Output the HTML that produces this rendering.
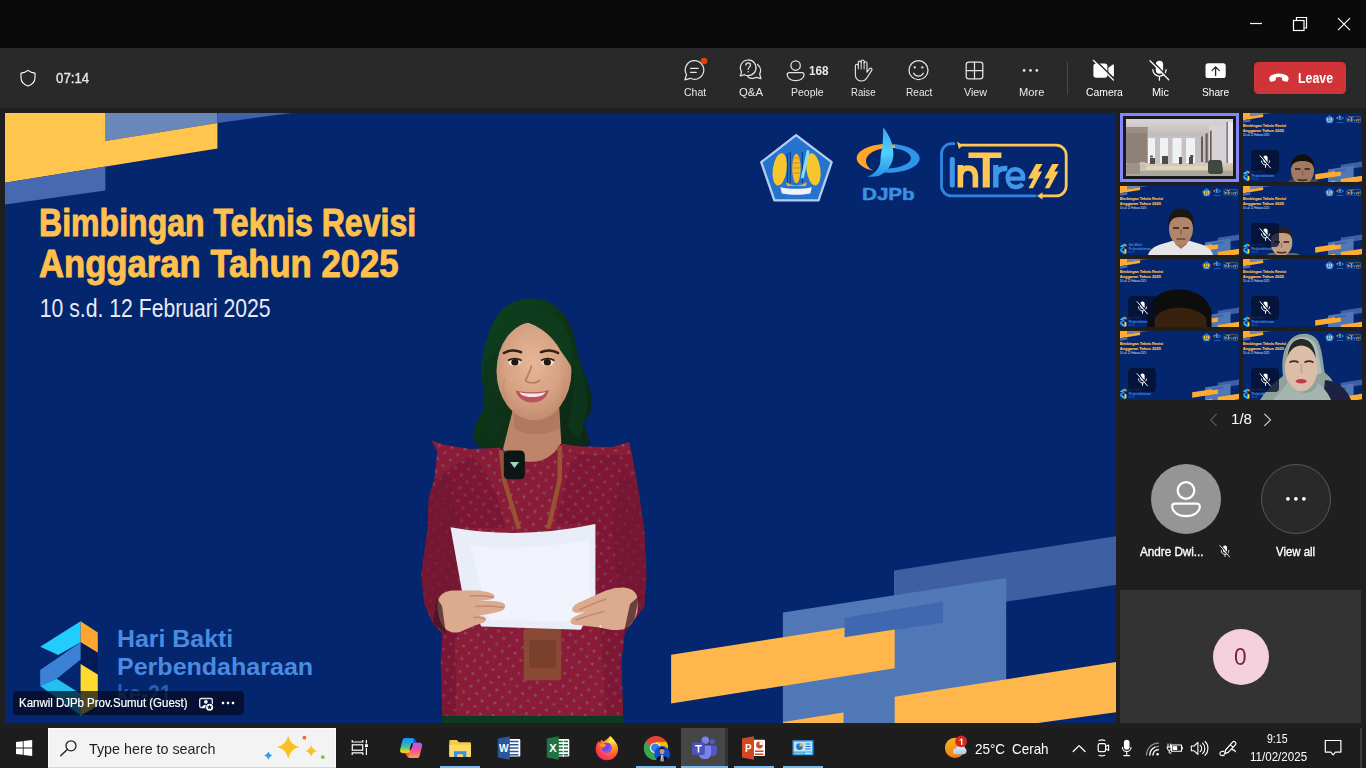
<!DOCTYPE html>
<html lang="en">
<head>
<meta charset="utf-8">
<title>Microsoft Teams meeting</title>
<style>
*{box-sizing:border-box;margin:0;padding:0}
html,body{width:1366px;height:768px;overflow:hidden;background:#1f1f1f}
body{position:relative;font-family:"Liberation Sans",sans-serif;color:#fff}
.t{position:absolute;white-space:nowrap;transform-origin:left center;display:block}
.abs{position:absolute}
.sb{-webkit-text-stroke:.35px currentColor}
.sb2{-webkit-text-stroke:.2px currentColor}
svg{position:absolute;overflow:visible}
#titlebar{position:absolute;left:0;top:0;width:1366px;height:48px;background:#0a0a0a}
#toolbar{position:absolute;left:0;top:48px;width:1366px;height:60px;background:#292929}
#stage{position:absolute;left:5px;top:113px;width:1111px;height:610px;background:#04266e;overflow:hidden}
#side{position:absolute;left:1116px;top:108px;width:250px;height:620px}
#taskbar{position:absolute;left:0;top:728px;width:1366px;height:40px;background:#1d1d1d}
</style>
</head>
<body>
<div id="titlebar">
<svg width="1366" height="48" viewBox="0 0 1366 48" style="left:0;top:0">
  <g fill="none" stroke="#fff" stroke-width="1.2">
    <path d="M1250 23.5H1262"/>
    <path d="M1296.500 20V17.500H1306.500V28H1304.500"/>
    <rect x="1293.500" y="20.500" width="10.500" height="10"/>
    <path d="M1338 18.2L1350 30.2M1350 18.2L1338 30.2" stroke-width="1.15"/>
  </g>
</svg>
</div>
<div id="toolbar">
<svg width="1366" height="60" viewBox="0 48 1366 60" style="left:0;top:0">
  <g fill="none" stroke="#e4e4e4" stroke-width="1.25" stroke-linecap="round" stroke-linejoin="round">
    <!-- shield -->
    <path d="M28 70.4C30.2 72.2 32.6 73 35 73.1V77.4C35 81.6 32 84.6 28 86C24 84.6 21 81.6 21 77.4V73.1C23.4 73 25.8 72.2 28 70.4Z" stroke="#fff" stroke-width="1.1"/>
    <!-- chat -->
    <path d="M694.6 60.7a9.3 9.3 0 1 1-4.3 17.6l-5.4 1.6 1.6-5.2a9.3 9.3 0 0 1 8.1-14z"/>
    <path d="M690.6 68.4H698.2M690.6 72.4H696.2"/>
    <!-- q&a --><g transform="translate(0 .8)">
    <path d="M748.2 59.2a7.8 7.8 0 1 1-3.6 14.7l-4.3 1.3 1.3-4.1a7.8 7.8 0 0 1 6.6-11.9z"/>
    <path d="M757.6 63.6a7.8 7.8 0 0 1 2.1 9.6l1.2 4.6-4.6-1.3a7.8 7.8 0 0 1-8.6-.6"/>
    <path d="M745.9 64.4c0-3 4.6-3 4.6 0 0 1.900-2.300 2-2.300 4.100" stroke-width="1.2"/>
    <circle cx="748.2" cy="71" r=".75" fill="#e4e4e4" stroke="none"/>
    </g><!-- people -->
    <circle cx="795.6" cy="65.6" r="4.7"/>
    <path d="M789.2 72.7H802a2 2 0 0 1 2 2c0 3.500-3.500 5.900-8.400 5.900s-8.400-2.400-8.400-5.900a2 2 0 0 1 2-2z"/>
    <!-- raise hand -->
    <path d="M855.4 74.800V65.700a1.450 1.450 0 0 1 2.900 0V62.600a1.450 1.450 0 0 1 2.900 0V61.500a1.450 1.450 0 0 1 2.900 0V63.200a1.450 1.450 0 0 1 2.900 0V72.200l2.600-3.500a1.350 1.350 0 0 1 2.100 1.700l-4.700 7.300c-1.400 2.200-3 3.300-5.400 3.300-3.600 0-6.200-2.400-6.200-6.200z" stroke-width="1.150"/>
    <path d="M858.300 65.700V68.900M861.200 62.600V68.900M864.100 63.200V68.900" stroke-width="1"/>
    <!-- react -->
    <circle cx="918.5" cy="70.2" r="9.5"/>
    <path d="M913.700 73.200c1.100 2 2.800 3 4.800 3s3.700-1 4.800-3"/>
    <circle cx="914.8" cy="67.400" r="1.150" fill="#e4e4e4" stroke="none"/>
    <circle cx="922.3" cy="67.400" r="1.150" fill="#e4e4e4" stroke="none"/>
    <!-- view -->
    <rect x="966.200" y="62.200" width="16.600" height="16.600" rx="2.600"/>
    <path d="M974.5 62.200V78.800M966.200 70.500H982.800"/>
    <!-- more -->
    <g fill="#e4e4e4" stroke="none"><circle cx="1024.1" cy="70.400" r="1.350"/><circle cx="1030.500" cy="70.400" r="1.350"/><circle cx="1036.800" cy="70.400" r="1.350"/></g>
    <!-- divider -->
    <path d="M1067.500 62V94" stroke="#484848" stroke-width="1"/>
  </g>
  <!-- camera off -->
  <g fill="#fff">
    <rect x="1093.400" y="63.400" width="14" height="14.300" rx="2.600"/>
    <path d="M1108.400 67.800l4.400-3.200a.7.700 0 0 1 1.100.6v10.700a.7.700 0 0 1-1.100.6l-4.400-3.200z"/>
    <path d="M1094.400 59.400L1114.400 79" stroke="#292929" stroke-width="1.500"/>
    <path d="M1093.300 60.300L1113.400 80" stroke="#fff" stroke-width="1.250" stroke-linecap="round"/>
    <!-- mic off -->
    <rect x="1155.800" y="60.700" width="7.300" height="13" rx="3.650"/>
    <path d="M1152.800 69.600a6.650 6.650 0 0 0 13.300 0M1159.450 76.400V80.200" fill="none" stroke="#fff" stroke-width="1.250" stroke-linecap="round"/>
    <path d="M1151.100 59.800L1169.700 78.900" stroke="#292929" stroke-width="1.500"/>
    <path d="M1150 60.700L1168.700 79.800" stroke="#fff" stroke-width="1.250" stroke-linecap="round"/>
    <!-- share -->
    <rect x="1205.500" y="63.300" width="20.200" height="14.800" rx="2.600"/>
    <path d="M1215.600 75.600V67M1211.900 70.600l3.700-3.700 3.700 3.700" fill="none" stroke="#292929" stroke-width="1.300" stroke-linecap="round" stroke-linejoin="round"/>
  </g>
  <!-- chat badge -->
  <circle cx="704" cy="61" r="3.300" fill="#e2400e"/>
  <!-- leave -->
  <rect x="1254" y="62" width="92" height="32" rx="4.500" fill="#d13438"/>
  <path d="M1278.900 73.500c-3.500 0-6.500.9-8.500 2.400-1 .8-1.300 1.900-1.100 3.100l.2 1.300c.2 1 1.100 1.600 2.100 1.400l2.600-.6c.8-.2 1.400-.800 1.500-1.600l.3-2c1-.4 1.900-.6 2.900-.6s1.900.2 2.900.6l.3 2c.1.800.7 1.400 1.500 1.600l2.600.6c1 .2 1.900-.4 2.100-1.400l.2-1.300c.2-1.200-.1-2.300-1.100-3.100-2-1.500-5-2.400-8.500-2.400z" fill="#fff"/>
</svg>
<span class="t sb" style="left:56.00px;top:23.82px;font-size:13.8px;line-height:13.8px;color:#e6e6e6;transform:scaleX(0.9614);">07:14</span>
<span class="t" style="left:684.00px;top:38.67px;font-size:10.9px;line-height:10.9px;color:#e8e8e8;transform:scaleX(0.9642);">Chat</span>
<span class="t" style="left:739.00px;top:38.67px;font-size:10.9px;line-height:10.9px;color:#e8e8e8;transform:scaleX(1.0426);">Q&amp;A</span>
<span class="t" style="left:808.80px;top:16.94px;font-size:12.0px;line-height:12.0px;color:#e8e8e8;transform:scaleX(0.9789);font-weight:700;">168</span>
<span class="t" style="left:790.60px;top:38.67px;font-size:10.9px;line-height:10.9px;color:#e8e8e8;transform:scaleX(0.9634);">People</span>
<span class="t" style="left:850.70px;top:38.67px;font-size:10.9px;line-height:10.9px;color:#e8e8e8;transform:scaleX(0.8791);">Raise</span>
<span class="t" style="left:905.80px;top:38.67px;font-size:10.9px;line-height:10.9px;color:#e8e8e8;transform:scaleX(0.9271);">React</span>
<span class="t" style="left:963.50px;top:38.67px;font-size:10.9px;line-height:10.9px;color:#e8e8e8;transform:scaleX(0.9859);">View</span>
<span class="t" style="left:1018.50px;top:38.67px;font-size:10.9px;line-height:10.9px;color:#e8e8e8;transform:scaleX(1.0228);">More</span>
<span class="t" style="left:1085.50px;top:38.67px;font-size:10.9px;line-height:10.9px;color:#fff;transform:scaleX(0.9518);">Camera</span>
<span class="t" style="left:1151.80px;top:38.67px;font-size:10.9px;line-height:10.9px;color:#fff;transform:scaleX(1.0028);">Mic</span>
<span class="t" style="left:1202.10px;top:38.67px;font-size:10.9px;line-height:10.9px;color:#fff;transform:scaleX(0.9317);">Share</span>
<span class="t" style="left:1297.70px;top:23.05px;font-size:14.0px;line-height:14.0px;color:#fff;transform:scaleX(0.8817);font-weight:700;">Leave</span>
</div>
<div id="stage">
<svg width="1111" height="610" viewBox="5 113 1111 610" style="left:0;top:0">
  <defs>
    <filter id="soft" x="-5%" y="-5%" width="110%" height="110%"><feGaussianBlur stdDeviation="0.7"/></filter>
    <filter id="soft2" x="-20%" y="-20%" width="140%" height="140%"><feGaussianBlur stdDeviation="2.2"/></filter>
    <pattern id="dots" width="13" height="13" patternUnits="userSpaceOnUse" patternTransform="rotate(8)">
      <circle cx="3" cy="3" r="1.5" fill="#82718a" opacity=".6"/>
      <circle cx="9.5" cy="9.5" r="1.4" fill="#7d6c86" opacity=".55"/>
    </pattern>
    <radialGradient id="skin" cx=".48" cy=".42" r=".62"><stop offset="0" stop-color="#e6b898"/><stop offset=".6" stop-color="#d6a283"/><stop offset="1" stop-color="#bf8a6d"/></radialGradient>
    <linearGradient id="hairg" x1="0" y1="0" x2="1" y2="1">
      <stop offset="0" stop-color="#12461f"/><stop offset=".5" stop-color="#0b3218"/><stop offset="1" stop-color="#082812"/>
    </linearGradient>
    <symbol id="slide" viewBox="5 113 1111 610" preserveAspectRatio="none">
      <rect x="5" y="113" width="1111" height="610" fill="#04266e"/>
      <!-- top-left shapes -->
      <polygon points="105.4,113 217.4,113 217.4,123 105.4,141" fill="#6a87b9"/>
      <polygon points="217.4,113 292,113 217.4,123" fill="#3f62ab"/>
      <polygon points="5,113 105.4,113 105.4,141 217.4,123 217.4,148.6 5,182.7" fill="var(--g1,#ffc54d)"/>
      <polygon points="5,182.7 105.4,166.6 105.4,190.4 5,204.6" fill="#4669b0"/>
      <!-- bottom-right shapes -->
      <polygon points="894,570.5 1116,536.2 1116,584.7 894,619" fill="#3f5fa3"/>
      <polygon points="782.9,612.6 1006.2,577.9 1006.2,723 782.9,723" fill="#5078b6"/>
      <polygon points="844.5,617.7 942.9,601.8 942.9,622.7 844.5,637.2" fill="#4068b0"/>
      <polygon points="671.1,654.7 844.5,627.8 844.5,637.2 894.7,629.4 894.7,668.2 671.1,703.5" fill="var(--g2,#ffb74d)"/>
      <polygon points="894.7,696.8 1116,662.1 1116,712.2 1038,723 894.7,723" fill="var(--g2,#ffb74d)"/>
      <polygon points="783,722 843.5,712.6 843.5,723 783,723" fill="var(--g2,#ffb74d)"/>
      <!-- headline -->
      <g font-family="Liberation Sans, sans-serif" font-weight="700" fill="#ffc04d" stroke="#ffc04d" stroke-width="1" stroke-linejoin="round">
        <text x="39" y="236" font-size="38.4" textLength="377.2" lengthAdjust="spacingAndGlyphs">Bimbingan Teknis Revisi</text>
        <text x="39" y="277" font-size="38.4" textLength="359.500" lengthAdjust="spacingAndGlyphs">Anggaran Tahun 2025</text>
      </g>
      <text x="39.800" y="317.100" font-family="Liberation Sans, sans-serif" font-size="25.500" fill="#e6eaf4" textLength="230.800" lengthAdjust="spacingAndGlyphs">10 s.d. 12 Februari 2025</text>
      <!-- logo 1 : pentagon -->
      <polygon points="796.1,135.2 831.7,162.2 818.5,200.4 774.4,200.4 761.2,162.2" fill="#2573cf" stroke="#b6cdf2" stroke-width="2.300" stroke-linejoin="round"/>
      <ellipse cx="779.8" cy="169.4" rx="7" ry="16.3" fill="#f7c62c" transform="rotate(8 779.8 169.4)"/>
      <ellipse cx="813.4" cy="169.4" rx="7" ry="16.3" fill="#f7c62c" transform="rotate(-8 813.4 169.4)"/>
      <path d="M787.500 153v30M790.300 152v31M802.400 152v31" stroke="#123e8a" stroke-width="1.300"/>
      <ellipse cx="796.4" cy="168.5" rx="4.200" ry="14.800" fill="#f2bb2a"/>
      <path d="M793 158h6.800M793 163h6.800M793 168h6.800M793 173h6.800" stroke="#c98f1c" stroke-width="1"/>
      <path d="M808 151.600L802.500 177" stroke="#7fe0f5" stroke-width="3" stroke-linecap="round"/>
      <path d="M786 182c3 2.500 8 3.500 10.400 3.500s7.400-1 10.400-3.500l-1 4h-18.800z" fill="#e9b324"/>
      <path d="M780.300 187.200c10 2 21.600 2 31.600 0l-1.600 6.300c-9 1.700-19.400 1.700-28.400 0z" fill="#eef2fa"/>
      <!-- logo 2 : DJPb -->
      <defs><linearGradient id="sail" x1="0" y1="0" x2="0" y2="1"><stop offset="0" stop-color="#3aa4ee"/><stop offset=".5" stop-color="#4fd0ff"/><stop offset="1" stop-color="#2a8ee6"/></linearGradient></defs>
      <path d="M888.400 143.700c-17.300 0-31.700 6.500-31.700 14.500 0 5.700 7 10.200 16.500 12.600-4.700-2.700-7.200-6.100-7.200-9.600 0-7.300 10-13.200 24.400-13.200 4 0 7.700.5 11.100 1.300-3.500-3.400-8-5.600-13.100-5.600z" fill="#ffa629"/>
      <path d="M893 143.900c15 1.300 26.700 7.300 26.700 14.300 0 8-14 14.500-31.300 14.500-3.500 0-6.800-.3-10-.8 2.700-.9 5.100-2 7.200-3.300 14.300-.3 25.300-5 25.300-10.400 0-4.500-6.300-8.300-14.800-9.800-.8-1.600-1.800-3.100-3.100-4.500z" fill="#2f95ea"/>
      <path d="M883.100 127.200c6.500 8 10.300 17 10.300 26.700 0 9.300-5.700 17.700-13.700 21.500-4 1.300-8.400 1.600-12.400 1.300 8-3 13.200-9 13.200-17.200 0-5 1.500-10.300 2.200-16.500.4-5 .5-10.300.4-15.800z" fill="url(#sail)"/>
      <text x="862" y="200.400" font-family="Liberation Sans, sans-serif" font-weight="700" font-size="16.500" fill="#3d8fe0" stroke="#3d8fe0" stroke-width=".5" textLength="52.700" lengthAdjust="spacingAndGlyphs">DJPb</text>
      <!-- logo 3 : InTress -->
      <path d="M955 143.700h-3.500a10 10 0 0 0-10 10V185.900a10 10 0 0 0 10 10H1036.500" fill="none" stroke="#2f86e0" stroke-width="2.800"/>
      <path d="M958.500 145.200H1056.200a10 10 0 0 1 10 10V185.900a10 10 0 0 1-10 10H1040" fill="none" stroke="#ffc655" stroke-width="2.800"/>
      <path d="M957 141.500l5.500 3.700-3.500 3.700z" fill="#ffc655"/><path d="M1042.500 192.200l-5.500 3.700 5.500 3.700z" fill="#ffc655"/>
      <rect x="949.800" y="156.900" width="5" height="30.700" rx="2" fill="#3f97ea"/>
      <path d="M960.400 165.100V187.600M960.400 177.500c0-6.300 2.700-9.500 7.500-9.500s7.500 3.200 7.500 9.500V187.600" fill="none" stroke="#ffc655" stroke-width="5.600"/>
      <path d="M968.400 152.500h33v5.600h-33zM982.700 152.500h7.100v35.100h-7.100z" fill="#ffc655"/>
      <path d="M995.800 165.100V187.600M995.800 177c0-6 4-9 11.500-8.500" fill="none" stroke="#3f97ea" stroke-width="5.400"/>
      <path d="M1009.500 178.600h13.600c.4-5.800-2.900-9.300-7.600-9.300s-7.900 3.700-7.900 8.800 3.300 8.900 8.100 8.900c3 0 5.300-1.100 6.900-3.200" fill="none" stroke="#3f97ea" stroke-width="4.400"/>
      <path d="M1036 164h6.500l-4.500 7.500h4l-9 16.700h-4.500l5-9.700h-5.500z" fill="#ffc655"/>
      <path d="M1052.300 164h6.500l-4.500 7.500h4l-9 16.700h-4.500l5-9.700h-5.500z" fill="#ffc655"/>
      <!-- Hari Bakti logo -->
      <polygon points="80.6,621.2 40.2,646.7 58.2,654.9 80.6,642.2" fill="#22ccfb"/>
      <polygon points="80.6,621.2 97.8,632.4 97.8,652.7 80.6,642.2" fill="#ffa530"/>
      <polygon points="80.6,642.2 97.8,652.7 97.8,674.4 80.6,663.9" fill="#031c58"/>
      <polygon points="80.6,642.2 40.2,669.9 40.2,686 56.7,678.8 80.6,659.4" fill="#3b82d6"/>
      <polygon points="40.2,686 56.7,678.8 80.6,693.8 80.6,715.5" fill="#22c0f0"/>
      <polygon points="80.6,663.9 97.8,674.4 97.8,705.8 80.6,715.5" fill="#ffd92e"/>
      <g font-family="Liberation Sans, sans-serif" font-weight="700" fill="#4a8ae0">
        <text x="117" y="647.300" font-size="23.700" textLength="116.200" lengthAdjust="spacingAndGlyphs">Hari Bakti</text>
        <text x="117" y="674.700" font-size="23.700" textLength="196.100" lengthAdjust="spacingAndGlyphs">Perbendaharaan</text>
        <text x="117" y="701.500" font-size="23.700" fill="#2c5cae" textLength="54.700" lengthAdjust="spacingAndGlyphs">ke-21</text>
      </g>
    </symbol>
  </defs>
  <use href="#slide" x="5" y="113" width="1111" height="610"/>
  <!-- presenter -->
  <g filter="url(#soft)">
    <!-- trousers -->
    <rect x="442" y="700" width="181" height="24" fill="#0a3a22"/>
    <!-- hair (back) -->
    <path d="M530.400,298.600C540,298 549,301 554.800,305.800C562,311.500 566.500,317 569.100,323C573,331 575,338 576.300,345.900C578,355 580.500,363.500 583.400,371.700C586.500,380 590,387 591.500,394.600C592.500,402 591.500,409 589.200,414.700C587.500,418 585,421 583.400,423.300C586,430 589,437 590.600,443.400C584,446.500 577,447 568,446L500.300,447.500C495,449.500 490,450 486,449.100C480.500,447.500 475.500,444.500 473.100,440.500C472.500,434.500 474,428.500 476,423.300C480,416 484.500,408.500 486,400.400C484,393 482.300,385.500 481.700,377.400C481.200,370 481.800,362.500 483.100,354.500C484.800,344.500 487.500,334.800 491.700,325.900C496,316.500 501.500,309 508.900,304.400C515.500,300.500 522.500,298.900 530.400,298.600Z" fill="url(#hairg)"/>
    <!-- neck -->
    <path d="M514,405H559L561.500,446L552,458L536,467L515,463.500L503,449Z" fill="#bd866a"/>
    <path d="M514,410C522,424 548,424 559,408L560,428C548,436 524,436 514,428Z" fill="#a8735a" opacity=".6"/>
    <!-- blouse -->
    <path d="M431.500,440.500L445,445L470,449L500.300,447.700C505,453 509,456 515,458.500C521,461 527,462 533,461.800C540,461.500 546,459 551,455C555,452 558,448 560.500,443.400L580,446.500L612,447L629.300,442L632,455L637.900,486.400L644.200,528.800L646.500,577.700L644.200,607L634.400,620L624.700,633L621.400,662.300L623,708L623,716H442.300L442.300,708L440.700,662.300L442.300,633L432.600,623.300L424.400,603.700L421.200,574.400L427.700,528.800L428.700,497.800L434.200,480L437.300,452Z" fill="#8a1c39"/>
    <path d="M431.500,440.500L445,445L470,449L500.300,447.700C505,453 509,456 515,458.500C521,461 527,462 533,461.800C540,461.500 546,459 551,455C555,452 558,448 560.500,443.400L580,446.500L612,447L629.300,442L632,455L637.900,486.400L644.200,528.800L646.500,577.700L644.200,607L634.400,620L624.700,633L621.400,662.300L623,708L623,716H442.300L442.300,708L440.700,662.300L442.300,633L432.600,623.300L424.400,603.700L421.200,574.400L427.700,528.800L428.700,497.800L434.200,480L437.300,452Z" fill="url(#dots)"/>
    <!-- shading on blouse -->
    <path d="M470,455C490,470 500,500 505,528L450.500,527.200L461.900,590.700L470,610L455,640L456,716H442.300L440.700,662.300L442.300,633L432.600,623.300L424.400,603.700L421.200,574.400L427.700,528.800L428.700,497.800L434.200,480Z" fill="#5c1026" opacity=".28"/>
    <path d="M575,455C565,475 560,505 556,524L595.400,524L595.400,603.700L600,630L606,716H623L621.400,662.300L624.700,633L634.400,620L644.200,607L646.500,577.700L644.200,528.800L637.900,486.400L632,455Z" fill="#5c1026" opacity=".22"/>
    <path d="M446,470L458,520L455,590L432,612L424.400,603.700L421.200,574.400L427.700,528.800L428.700,497.800Z" fill="#6f152f" opacity=".55"/>
    <path d="M622,470L612,520L618,590L640,612L644.200,607L646.500,577.700L644.200,528.800L637.900,486.400Z" fill="#6f152f" opacity=".55"/>
    <!-- face -->
    <ellipse cx="534" cy="371" rx="37.500" ry="49" fill="url(#skin)"/>
    <path d="M496,368C497.500,350 501,338 508,329C511,325 514,322.500 517.400,321.500C523,320.500 531,322.500 542,329.800C550,335.500 556.500,343 560.800,351C565,357 569,362 572,368C577,340 565,312 534,308C505,309 491,340 496,368Z" fill="#0c3a1b"/>
    <!-- face features -->
    <path d="M504,353c5-3.200 12-3.200 17-.8M541,352.200c5-2.400 12-2.400 17 .8" stroke="#33201a" stroke-width="2.600" fill="none" stroke-linecap="round"/>
    <ellipse cx="514.600" cy="362.500" rx="6.200" ry="3.300" fill="#f1e6de"/>
    <ellipse cx="547.600" cy="362.500" rx="6.200" ry="3.300" fill="#f1e6de"/>
    <ellipse cx="514.900" cy="362.300" rx="3.600" ry="3.200" fill="#22140f"/>
    <ellipse cx="547.300" cy="362.300" rx="3.600" ry="3.200" fill="#22140f"/>
    <path d="M508,360.500c4-2.500 9.500-2.500 13.500 0M541,360.500c4-2.500 9.500-2.500 13.500 0" stroke="#2a1812" stroke-width="1.500" fill="none"/>
    <path d="M531.500,366C530,372 527,377 525.500,380.500C528,383.500 536,384 539.500,380.500" stroke="#b98264" stroke-width="1.800" fill="none" stroke-linecap="round"/>
    <path d="M515.500,390.500c7 2.500 26 2.500 33.500-.5-2.500 9-9.500 12.500-17 12.500s-14-4-16.500-12z" fill="#b8525e"/>
    <path d="M519.500,392.300c6 1.800 20 1.800 26-.3-1.800 3.600-5.800 5-13 5s-11.400-1.400-13-4.700z" fill="#f3eae6"/>
    <path d="M505,378c-3 8-2 18 4 26M563,378c3 8 2 18-4 26" stroke="#c08d70" stroke-width="2" fill="none" opacity=".55"/>
    <!-- hair side strands over face edge -->
    <path d="M497.500,350C493,375 494,405 500,430L488,440L483,400L484,362Z" fill="#0b351a"/>
    <path d="M571,350C575,375 574,400 568,428L580,440L588,405L582,368Z" fill="#0b351a"/>
    <!-- lanyard -->
    <path d="M501,450L504.200,480L518.900,528.800M560,446L559.600,480L548.200,528.800" stroke="#9a5330" stroke-width="4.500" fill="none"/>
    <!-- lavalier mic -->
    <rect x="503.800" y="450.500" width="21" height="28.700" rx="4.500" fill="#0c1612"/>
    <path d="M510,462h9l-4.500,6z" fill="#9fd8c0"/>
    <!-- ID badge -->
    <rect x="523.700" y="628" width="37.500" height="52.300" rx="3" fill="#8a4a36"/>
    <rect x="529" y="640" width="27" height="28" rx="2" fill="#7a3f2f"/>
    <!-- paper -->
    <path d="M450.500,527.200Q520,540 595.400,524L595.400,603.700L580.700,629.800L481.400,626.500L461.900,590.700Z" fill="#e8edf7"/>
    <path d="M470,545Q520,552 590,540L590,600L578,622L490,620Z" fill="#f1f4fb" opacity=".8"/>
    <!-- hands -->
    <path d="M437.6,603C438,596 444,591 452,590.5L470,590.5C480,590 492,592 494,595C495,597.5 493,599 490,599.5L478,601C488,600.5 500,601 504,603.5C506.5,606 505,609.5 501,611C494,613 486,614.5 478,616C482,616 486,617 486,619.5C486,622 482,623.5 476,625L462,631C455,634.5 447,632 443,626C439,620 437,611 437.6,603Z" fill="#dcab8e"/>
    <path d="M470,596C480,595.5 489,596 493.500,597.500M476,606.500C486,605.500 496,606 503,607.500M474,617.500C478,617 482,617.500 485,619" stroke="#c18a78" stroke-width="1.600" fill="none" stroke-linecap="round"/>
    <path d="M637.9,600C637.5,593 632,588 624,587.5C616,587 606,590 598,594L578,603C573,605.5 571,609 573,611.5C575,613.5 580,613 586,611.5C580,614 573,617 571,619.5C569.5,622.5 572,625 577,625L600,627.5C608,630 618,631 624,629C631,626.5 636,619 637.5,611Z" fill="#dcab8e"/>
    <path d="M606,599C597,602 588,606 580,609.500M604,611.500C595,613.500 584,617 576,620" stroke="#c18a78" stroke-width="1.600" fill="none" stroke-linecap="round"/>
    <circle cx="600.500" cy="626.500" r="1.400" fill="#f0d9a0"/>
    <!-- cuffs -->
    <path d="M432.600,623.300L446,634L442,606L437,598Z" fill="#3a1220" opacity=".7"/>
    <path d="M634.400,620L624,632L630,604L639,596Z" fill="#3a1220" opacity=".7"/>
  </g>
</svg>
<!-- participant name pill -->
<div class="abs" style="left:8px;top:578.400px;width:231px;height:23.600px;border-radius:4px;background:rgba(4,10,32,.72)"></div>
<span class="t sb2" style="left:14.40px;top:584.34px;font-size:12.0px;line-height:12.0px;color:#fff;transform:scaleX(0.9546);">Kanwil DJPb Prov.Sumut (Guest)</span>
<svg width="40" height="16" viewBox="197 696 40 16" style="left:192px;top:583px">
  <rect x="199.700" y="698.500" width="12.600" height="9" rx="1.400" fill="none" stroke="#dfe3ee" stroke-width="1.400"/>
  <circle cx="205.900" cy="701.800" r="1.900" fill="#fff"/><path d="M202 707.400c0-3.400 7.800-3.400 7.800 0z" fill="#fff"/>
  <circle cx="209.600" cy="707.200" r="4.300" fill="#06122f"/>
  <circle cx="209.600" cy="707.200" r="3.500" fill="#fff"/>
  <path d="M209.600 704.700l.75 1.600 1.750.2-1.300 1.150.4 1.700-1.600-.9-1.600.9.4-1.700-1.300-1.150 1.750-.2z" fill="#06122f"/>
  <g fill="#fff"><rect x="221.800" y="701.850" width="2.400" height="2.400" rx=".7"/><rect x="226.800" y="701.850" width="2.400" height="2.400" rx=".7"/><rect x="231.800" y="701.850" width="2.400" height="2.400" rx=".7"/></g>
</svg>
</div>
<div id="side">
<style>
.tile{position:absolute;width:119px;height:68.670px;--g1:#ffab32;--g2:#ffab32;overflow:hidden;background:#04266e}
.tile svg{left:0;top:0}
.mut{position:absolute;width:28px;height:24px;border-radius:4px;background:rgba(6,16,44,.78)}
</style>
<svg width="0" height="0" style="left:0;top:0">
  <defs>
    <symbol id="micoff" viewBox="0 0 16 16">
      <rect x="5.700" y="1.600" width="4.600" height="8" rx="2.300" fill="#fff"/>
      <path d="M3.700 7.400a4.300 4.300 0 0 0 8.600 0M8 11.800V14.300" fill="none" stroke="#fff" stroke-width="1" stroke-linecap="round"/>
      <path d="M2.900 1.300L14 14.300" stroke="var(--sh,#0a1838)" stroke-width="1.300"/>
      <path d="M2.200 1.800L13.300 14.800" stroke="#fff" stroke-width="1" stroke-linecap="round"/>
    </symbol>
  </defs>
</svg>
<!-- tile 1 : room background, active speaker ring -->
<div class="tile" style="left:4px;top:5px;height:69px;background:#1a1a1a;border:3px solid #8486fb">
  <svg width="107" height="57" viewBox="0 0 107 57" style="left:3px;top:3px;overflow:hidden">
    <defs>
      <linearGradient id="ceil" x1="0" y1="0" x2="0" y2="1"><stop offset="0" stop-color="#d9d6d6"/><stop offset="1" stop-color="#bdb6b3"/></linearGradient>
      <linearGradient id="floor" x1="0" y1="0" x2="0" y2="1"><stop offset="0" stop-color="#d9cdb8"/><stop offset="1" stop-color="#b4ae9e"/></linearGradient>
    </defs>
    <g filter="url(#soft)"><rect x="-2" y="-2" width="111" height="61" fill="#c9c4c4"/>
    <rect width="107" height="20" fill="url(#ceil)"/>
    <rect x="21" y="17" width="62" height="30" fill="#c6c0c2"/>
    <rect x="0" y="8" width="21.500" height="40" fill="#8f8177"/>
    <rect x="0" y="8" width="21.500" height="6" fill="#9f948b" opacity=".7"/>
    <g fill="#f0f1f3"><rect x="22" y="19" width="7" height="25"/><rect x="34" y="19" width="8" height="25"/><rect x="46.500" y="19" width="9" height="25"/><rect x="60" y="19" width="9" height="25"/></g>
    <rect x="83" y="6" width="24" height="48" fill="#d6d2d6"/>
    <path d="M75 18l2-1v26h-2zM79.500 15l2.200-1.200v30h-2.200zM84 12l1.600-.8v32h-1.600z" fill="#6a5d58"/>
    <rect x="101.500" y="3" width="5.500" height="50" fill="#e9e9ee"/><rect x="100.500" y="3" width="1.300" height="50" fill="#6d6560"/>
    <rect x="0" y="44" width="107" height="13" fill="url(#floor)"/>
    <path d="M22 47h66l4 4H18z" fill="#e4d9c2" opacity=".8"/>
    <path d="M0 52h107v5H0z" fill="#aaa79b"/>
    <rect x="0" y="44" width="14" height="11" rx="1.500" fill="#9c9288"/><rect x="14" y="43" width="5" height="9" fill="#c9bfb2"/>
    <g fill="#4f4b49"><rect x="24" y="39" width="5" height="6"/><rect x="36" y="37" width="6" height="8"/><rect x="53" y="38" width="3" height="7"/><rect x="63" y="38" width="4" height="7"/><rect x="24" y="36.500" width="3" height="2" rx="1"/><rect x="64" y="36" width="3.500" height="2" rx="1"/></g>
    <path d="M82 44c0-2 1-3 3-3h8c2 0 3 1 3 3l1 8c0 2-1 3-3 3h-9c-2 0-3-1-3-3z" fill="#3f4a40"/>
    </g>
  </svg>
</div>
<!-- slide tiles -->
<div class="tile" style="left:127px;top:5px;height:69px"><svg width="119" height="69"><use href="#slide" x="-4.200" width="127.400" height="69"/>
  <g filter="url(#soft)"><path d="M45 69c1-2 3-3 6-3h18c3 0 5 1 6 3z" fill="#4a463f"/><ellipse cx="59.500" cy="57.500" rx="11.500" ry="14" fill="#a27a63"/><path d="M47.800 55c-.5-9 4.500-13.500 11.700-13.500s12.200 4.500 11.700 13.500c-2-5-4.500-7-11.700-7s-9.700 2-11.700 7z" fill="#15110e"/><path d="M52 56h5.500M61.500 56h5.500" stroke="#2a1c14" stroke-width="1.300"/><path d="M59.500 57.500v5" stroke="#8a624e" stroke-width="1.400"/><path d="M54.500 66.500c3 1 7 1 10 0" stroke="#4a2f25" stroke-width="1.600" fill="none"/></g></svg>
  <div class="mut" style="left:8px;top:36.500px"><svg width="15" height="15" style="left:6.500px;top:4.500px"><use href="#micoff" width="15" height="15"/></svg></div></div>
<div class="tile" style="left:4px;top:78px;height:69px"><svg width="119" height="69"><use href="#slide" x="-4.200" width="127.400" height="69"/>
  <g filter="url(#soft)"><path d="M28 69c2-7 9-10 19-12.500l8-2.500h12l8 2.500c10 2.500 16 5.500 18 12.500z" fill="#e6e6e8"/><path d="M55 52h12v6l-6 5-6-5z" fill="#a9795e"/><ellipse cx="61" cy="42.500" rx="12" ry="16.500" fill="#b08569"/><path d="M48.700 41c-1.200-12 4.300-18.500 12.300-18.500s13.500 6.500 12.300 18.500c-1.500-7-4-10-12.300-10s-10.800 3-12.300 10z" fill="#1a1410"/><path d="M53 42h6M63 42h6" stroke="#2a1c14" stroke-width="1.400"/><path d="M61 43v6" stroke="#8a624e" stroke-width="1.400"/><path d="M56.500 53h9" stroke="#6a4030" stroke-width="1.400"/></g></svg></div>
<div class="tile" style="left:127px;top:78px;height:69px"><svg width="119" height="69"><use href="#slide" x="-4.200" width="127.400" height="69"/>
  <g filter="url(#soft)"><path d="M24 69c1-1.500 3-2 6-2h18c4 0 7 .5 9 2z" fill="#6a6a60"/><ellipse cx="38.500" cy="56.500" rx="10.800" ry="13.500" fill="#c39f84"/><path d="M27.500 53c-.5-8 4-12 11-12s11.500 4 11 12c-2-4.500-4-6-11-6s-9 1.500-11 6z" fill="#2a241c"/><path d="M31.500 56h5.500M40.500 56h5.500" stroke="#2a1c14" stroke-width="1.300"/><path d="M38.500 57v5" stroke="#9a755f" stroke-width="1.300"/><path d="M34 66c3 1 6.500 1 9 0" stroke="#4a3328" stroke-width="1.600" fill="none"/></g></svg>
  <div class="mut" style="left:8px;top:36.500px"><svg width="15" height="15" style="left:6.500px;top:4.500px"><use href="#micoff" width="15" height="15"/></svg></div></div>
<div class="tile" style="left:4px;top:151px;height:68px"><svg width="119" height="69"><use href="#slide" x="-4.200" width="127.400" height="69"/>
  <g filter="url(#soft)"><path d="M27.500 69V56c0-14 12-25.500 31-25.500s33 11 33 25.500v13z" fill="#0d0a09"/><path d="M34.500 69V59c4-6.500 15-10.500 25-10.500s22 4 27 10.500v10z" fill="#38200f"/></g></svg>
  <div class="mut" style="left:8px;top:36.500px"><svg width="15" height="15" style="left:6.500px;top:4.500px"><use href="#micoff" width="15" height="15"/></svg></div></div>
<div class="tile" style="left:127px;top:151px;height:68px"><svg width="119" height="69"><use href="#slide" x="-4.200" width="127.400" height="69"/></svg>
  <div class="mut" style="left:8px;top:36.500px"><svg width="15" height="15" style="left:6.500px;top:4.500px"><use href="#micoff" width="15" height="15"/></svg></div></div>
<div class="tile" style="left:4px;top:223px;height:69px"><svg width="119" height="69"><use href="#slide" x="-4.200" width="127.400" height="69"/></svg>
  <div class="mut" style="left:8px;top:36.500px"><svg width="15" height="15" style="left:6.500px;top:4.500px"><use href="#micoff" width="15" height="15"/></svg></div></div>
<div class="tile" style="left:127px;top:223px;height:69px"><svg width="119" height="69"><use href="#slide" x="-4.200" width="127.400" height="69"/>
  <g filter="url(#soft)">
    <path d="M17 69C25 56 35 49 40 45C38 30 40 12 52 5C60 1 70 2 75 10C80 20 80 35 82 42C88 46 92 52 90 58L88 69Z" fill="#8fa39c"/>
    <path d="M47 12C54 4 68 4 73 14C76 22 77 32 79 42L72 44L46 40C44 30 43 20 47 12Z" fill="#aebeb7"/>
    <path d="M44.500 28C45 12 52 8 58.500 8S72 12 73 28C70 18 65 15 58.500 15S47 18 44.500 28Z" fill="#252a28"/>
    <path d="M82 49C95 50 104 58 108 69H80Z" fill="#1a2340"/>
    <ellipse cx="58.200" cy="37.500" rx="16.300" ry="23" fill="#dcbda9"/>
    <path d="M30 69C38 60 43 55 45 50C50 58 56 62 62 62C68 62 73 58 75 52C80 56 86 63 88 69Z" fill="#a3b5ae"/>
    <path d="M46.500 31.500C49 30 53 30 55.500 31.500M61.500 31.500C64 30 68 30 70.500 31.500" stroke="#3a2a24" stroke-width="1.800" fill="none"/>
    <path d="M58.500 33V42" stroke="#c7a28e" stroke-width="2"/>
    <ellipse cx="58.200" cy="50.300" rx="5.600" ry="2.200" fill="#c23a44"/>
  </g></svg>
  <div class="mut" style="left:8px;top:36.500px"><svg width="15" height="15" style="left:6.500px;top:4.500px"><use href="#micoff" width="15" height="15"/></svg></div></div>
<!-- pager -->
<svg width="70" height="16" viewBox="1206 411 70 16" style="left:90px;top:303px">
  <path d="M1216.4 414.1l-5.800 5.800 5.800 5.800" fill="none" stroke="#5c5c5c" stroke-width="1.200" stroke-linecap="round" stroke-linejoin="round"/>
  <path d="M1264.700 414.100l5.800 5.800-5.800 5.800" fill="none" stroke="#d0d0d0" stroke-width="1.200" stroke-linecap="round" stroke-linejoin="round"/>
</svg>
<span class="t" style="left:114.60px;top:304.01px;font-size:14.4px;line-height:14.4px;color:#fff;transform:scaleX(1.0490);">1/8</span>
<!-- overflow participants -->
<div class="abs" style="left:35px;top:356px;width:70px;height:70px;border-radius:50%;background:#959595"></div>
<svg width="70" height="70" viewBox="1151 464 70 70" style="left:35px;top:356px">
  <g fill="none" stroke="#fff" stroke-width="2.200">
    <circle cx="1186" cy="490.500" r="8.300"/>
    <path d="M1174.800 503.700h22.400a2.600 2.600 0 0 1 2.600 2.600c0 5.800-5.800 9.800-13.800 9.800s-13.800-4-13.800-9.800a2.600 2.600 0 0 1 2.600-2.600z"/>
  </g>
</svg>
<div class="abs" style="left:145px;top:356px;width:70px;height:70px;border-radius:50%;border:1px solid #5a5a5a;background:#292929"></div>
<svg width="30" height="10" viewBox="1281 494 30 10" style="left:165px;top:386px"><g fill="#fff"><circle cx="1287.9" cy="498.8" r="1.9"/><circle cx="1295.9" cy="498.8" r="1.9"/><circle cx="1303.9" cy="498.8" r="1.9"/></g></svg>
<span class="t sb" style="left:23.60px;top:436.60px;font-size:13.0px;line-height:13.0px;color:#fff;transform:scaleX(0.8983);">Andre Dwi...</span>
<span class="t sb" style="left:159.80px;top:436.60px;font-size:13.0px;line-height:13.0px;color:#fff;transform:scaleX(0.8774);">View all</span>
<svg width="14" height="14" style="left:102px;top:436px;--sh:#1f1f1f"><use href="#micoff" width="14" height="14"/></svg>
<!-- own video placeholder -->
<div class="abs" style="left:4px;top:482px;width:241px;height:133px;background:#333"></div>
<div class="abs" style="left:96.500px;top:521px;width:56px;height:56px;border-radius:50%;background:#f4d1dc"></div>
<span class="t" style="left:118.30px;top:537.51px;font-size:23.5px;line-height:23.5px;color:#7b1f3e;transform:scaleX(0.9640);">0</span>
</div>
<div id="taskbar">
<!-- search box -->
<div class="abs" style="left:48px;top:0;width:288px;height:40px;background:#f3f3f3;border:1px solid #fafafa;border-bottom-color:#d6d6d6"></div>
<!-- running-app highlight (Teams) -->
<div class="abs" style="left:681px;top:0;width:44px;height:40px;background:#464646"></div>
<div class="abs" style="left:725px;top:0;width:3px;height:40px;background:#323232"></div>
<svg width="1366" height="40" viewBox="0 728 1366 40" style="left:0;top:0">
  <!-- windows logo -->
  <g fill="#fff">
    <path d="M16 742.100l6.800-.9v6.400H16zM23.600 741.100l8.600-1.200v7.700h-8.600zM16 748.400h6.800v6.400l-6.800-.9zM23.600 748.400h8.600v7.700l-8.600-1.200z"/>
  </g>
  <!-- search glyph -->
  <circle cx="71" cy="745.800" r="5" fill="none" stroke="#222" stroke-width="1.300"/>
  <path d="M67.300 749.600l-6.600 6.200" stroke="#222" stroke-width="1.400" stroke-linecap="round"/>
  <!-- sparkles -->
  <path d="M288.2 735.8Q290.4 744.9 299.5 747.1Q290.4 749.3 288.2 758.4Q286 749.3 276.9 747.1Q286 744.9 288.2 735.8Z" fill="#fbc124"/>
  <path d="M311.1 745.1Q312.3 749.7 316.9 750.9Q312.3 752.1 311.1 756.7Q309.9 752.1 305.3 750.9Q309.9 749.7 311.1 745.1Z" fill="#fbc124"/>
  <path d="M268.3 751.2Q269.2 754.7 272.7 755.6Q269.2 756.5 268.3 760Q267.4 756.5 263.9 755.6Q267.4 754.7 268.3 751.2Z" fill="#2f9cf0"/>
  <circle cx="304.400" cy="737.700" r="1.900" fill="#f2662a"/>
  <circle cx="322.800" cy="757.100" r="1.900" fill="#79c143"/>
  <!-- task view -->
  <g fill="none" stroke="#fff" stroke-width="1.200">
    <rect x="352.300" y="744.800" width="10.400" height="5.400"/>
    <path d="M352.200 739.900v2.100h10.600v-2.100M352.200 755v-2.200h10.600v2.200M366.400 739.900v3.600M366.400 748v7"/>
  </g>
  <rect x="365" y="744.200" width="2.900" height="2.900" fill="#fff"/>
  <!-- copilot -->
  <defs>
    <linearGradient id="cp1" x1="0" y1="0" x2="0" y2="1"><stop offset="0" stop-color="#1a8ff0"/><stop offset=".3" stop-color="#1fa3e8"/><stop offset=".6" stop-color="#46c882"/><stop offset=".9" stop-color="#f3d31e"/><stop offset="1" stop-color="#f5b21e"/></linearGradient>
    <linearGradient id="cp2" x1="0" y1="0" x2="0" y2="1"><stop offset="0" stop-color="#a860f4"/><stop offset=".45" stop-color="#ec4f9c"/><stop offset="1" stop-color="#ff9e4a"/></linearGradient>
    <radialGradient id="ffx" cx=".7" cy=".2" r=".95"><stop offset="0" stop-color="#ffe14a"/><stop offset=".4" stop-color="#ff8a1e"/><stop offset=".75" stop-color="#ff3b4e"/><stop offset="1" stop-color="#ef1a9a"/></radialGradient>
  </defs>
  <path d="M411.800 737.900c2.200 0 3.700 1.200 4.300 3l.9 2.700h-5z" fill="#1550c8"/>
  <path d="M410.400 758c-2.200 0-3.700-1.200-4.300-3l-.9-2.700h5z" fill="#f0552a"/>
  <path d="M404.600 737.900h7.200c1.600 0 2.400 1.200 2 2.600l-3 10.200c-.5 1.600-1.800 2.500-3.400 2.500h-4.600c-2 0-3.200-1.600-2.700-3.400l2.300-9.200c.4-1.600 1.200-2.700 2.200-2.700z" fill="url(#cp1)"/>
  <path d="M417.600 758h-7.200c-1.600 0-2.400-1.200-2-2.600l3-10.200c.5-1.600 1.800-2.500 3.400-2.500h4.600c2 0 3.200 1.600 2.700 3.400l-2.300 9.200c-.4 1.600-1.200 2.700-2.200 2.700z" fill="url(#cp2)"/>
  <path d="M411.300 743.500l-1.900 6.600c1.300-.4 2.100-1.300 2.500-2.700l1.200-4.100c-.7-.1-1.300 0-1.800.2z" fill="#15151a"/>
  <!-- file explorer -->
  <path d="M449.300 741.200a1.200 1.200 0 0 1 1.200-1.200h6.300l2.200 2.300h10.800a1.200 1.200 0 0 1 1.200 1.200v12.300a1.200 1.200 0 0 1-1.200 1.200h-19.300a1.200 1.200 0 0 1-1.200-1.200z" fill="#f7c948"/>
  <path d="M449.300 744.800h21.700v11a1.200 1.200 0 0 1-1.200 1.200h-19.300a1.200 1.200 0 0 1-1.200-1.200z" fill="#fbd968"/>
  <path d="M454 751.300h12.300v5.700h-3.300v-2.800h-5.700v2.800H454z" fill="#3d8ee6"/>
  <rect x="440" y="766" width="40" height="2" fill="#76b9ed"/>
  <!-- word -->
  <rect x="505.500" y="739" width="14.800" height="17.600" rx="1" fill="#fff"/>
  <path d="M509 741.500h9.500M509 744.800h9.500M509 748.100h9.500M509 751.400h9.500M509 754.700h9.500" stroke="#2b579a" stroke-width="1.500"/>
  <path d="M497.800 738.600l12-2.300v23.400l-12-2.300z" fill="#2b579a"/>
  <text x="499" y="752.300" font-family="Liberation Sans, sans-serif" font-weight="700" font-size="10.500" fill="#fff" textLength="9.600" lengthAdjust="spacingAndGlyphs">W</text>
  <!-- excel -->
  <rect x="554.500" y="739" width="14.800" height="17.600" rx="1" fill="#fff"/>
  <path d="M558 741.500h10M558 744.800h10M558 748.100h10M558 751.400h10M558 754.700h10" stroke="#217346" stroke-width="1.500"/>
  <path d="M563.300 739v18" stroke="#fff" stroke-width="1"/>
  <path d="M546.800 738.600l12-2.300v23.400l-12-2.300z" fill="#217346"/>
  <text x="549.200" y="752.300" font-family="Liberation Sans, sans-serif" font-weight="700" font-size="10.500" fill="#fff" textLength="7.400" lengthAdjust="spacingAndGlyphs">X</text>
  <!-- firefox -->
  <path d="M610.100 735.900c1.800 1.700 3.200 3.300 4.300 5 2.300 2 3.700 4.800 3.700 8.200a11.200 11.200 0 0 1-22.400 0c0-3.400 1.300-6.200 3.100-8.300.3.900.7 1.500 1.300 2 .1-1.300.6-2.400 1.500-3.300.5.900 1.200 1.500 2.200 1.900 1.600-1.200 3.800-2.300 6.300-5.500z" fill="url(#ffx)"/>
  <path d="M610.100 735.900c3.200 2.700 5.900 6 6.700 9.500-1.200-2-2.600-3.300-4.300-4-1 .8-2.500 1.200-4.300 1.200 1-1.900 1.800-4 1.900-6.700z" fill="#ffe548"/>
  <circle cx="606.800" cy="747.700" r="5" fill="#7542e5"/>
  <path d="M599.500 744.500c2.300-.8 5.500-.6 7.500.8-1.500.3-2.400 1-2.700 2.200-2.200 0-3.700-1-4.800-3z" fill="#ff9a1e"/>
  <path d="M609.500 743.700c1.500 1 2.500 2.500 2.500 4.300 0 2.800-2.300 5-5.200 5-2.200 0-4-1.200-4.800-3 1.500 1 3.800 1.200 5.500.2 2-1.200 2.800-3.500 2-6.500z" fill="#9059f0" opacity=".9"/>
  <!-- chrome -->
  <circle cx="656" cy="748" r="12.100" fill="#ea4335"/>
  <path d="M656 748l-10.480-6.050a12.100 12.100 0 0 0 4.430 16.530z" fill="#34a853"/>
  <path d="M656 748l-6.050 10.480a12.100 12.100 0 0 0 6.050 1.620 12.100 12.100 0 0 0 5-1.100z" fill="#34a853"/>
  <path d="M656 748h12.100a12.100 12.100 0 0 0-1.620-6.050h-10.480z" fill="#fbbc05"/>
  <path d="M656 748h12.100a12.100 12.100 0 0 1-6.600 10.800z" fill="#fbbc05"/>
  <circle cx="655.300" cy="747.800" r="5.400" fill="#f4f4f4"/>
  <circle cx="655.300" cy="747.800" r="4.300" fill="#3b7ded"/>
  <circle cx="662.100" cy="754" r="7.900" fill="#0f4fd0"/>
  <path d="M656.300 759.300c.8-2.600 3-3.600 5.800-3.600s5 1 5.800 3.600a7.900 7.900 0 0 1-11.600 0z" fill="#0d0f1a"/>
  <ellipse cx="662.100" cy="751.300" rx="2.300" ry="3" fill="#c99878"/>
  <path d="M659.700 750.500c-.2-2.400.9-3.500 2.400-3.500s2.600 1.100 2.400 3.500c-.5-1.200-1.200-1.600-2.400-1.600s-1.900.4-2.400 1.600z" fill="#14100e"/>
  <path d="M661 755.300h2.200l.5 6h-3.200z" fill="#e9e9ee"/><path d="M661.800 756h.7l.3 5.300h-1.300z" fill="#6a6a78"/>
  <rect x="636" y="766" width="40" height="2" fill="#76b9ed"/>
  <!-- teams -->
  <circle cx="712.300" cy="741.600" r="2.700" fill="#5059c9"/>
  <path d="M709.500 745.600h6.300a1.100 1.100 0 0 1 1.100 1.100v5.500a3.900 3.900 0 0 1-7.400 1.600z" fill="#5059c9"/>
  <circle cx="705.300" cy="740.300" r="3.700" fill="#7b83eb"/>
  <path d="M700 745.600h10a1.100 1.100 0 0 1 1.100 1.100v7a5.300 5.300 0 0 1-5.300 5.300h-1.600a5.300 5.300 0 0 1-5.300-5.300v-7a1.100 1.100 0 0 1 1.100-1.100z" fill="#7b83eb"/>
  <rect x="692.200" y="742.300" width="12.600" height="12.600" rx="1.300" fill="#4b53bc"/>
  <path d="M695.200 745.700h6.600M698.500 745.700v6.800" stroke="#fff" stroke-width="1.600"/>
  <rect x="681" y="766" width="47" height="2" fill="#76b9ed"/>
  <!-- powerpoint -->
  <rect x="750.500" y="739.700" width="14.500" height="16.300" rx="1" fill="#fff"/>
  <circle cx="759.500" cy="745" r="3.400" fill="#d24726"/><path d="M759.500 745v-3.400a3.400 3.400 0 0 1 3.400 3.400z" fill="#fff"/>
  <path d="M755 751.200h8.500M755 754.300h8.500" stroke="#d24726" stroke-width="1.500"/>
  <path d="M742 738.600l12-2.300v23.400l-12-2.300z" fill="#d24726"/>
  <text x="745" y="752.300" font-family="Liberation Sans, sans-serif" font-weight="700" font-size="10.500" fill="#fff" textLength="6.600" lengthAdjust="spacingAndGlyphs">P</text>
  <rect x="734" y="766" width="40" height="2" fill="#76b9ed"/>
  <!-- slide-show app -->
  <rect x="792.500" y="740.200" width="21" height="15" rx="1" fill="#38a5f2"/>
  <rect x="794" y="741.700" width="18" height="9.800" fill="#bfe3fb"/>
  <circle cx="799.500" cy="746.600" r="3.400" fill="#1e78d0"/><path d="M799.500 746.600v-3.400a3.400 3.400 0 0 1 3.400 3.400z" fill="#f2b13a"/>
  <path d="M805.500 744h5M805.500 746.500h5M805.500 749h5" stroke="#1e78d0" stroke-width="1.200"/>
  <path d="M794.500 753.300h9" stroke="#f2b13a" stroke-width="1.300"/><path d="M805 753.300h6.500" stroke="#dff1fd" stroke-width="1.300"/>
  <rect x="783" y="766" width="40" height="2" fill="#76b9ed"/>
  <!-- weather -->
  <defs><linearGradient id="sun" x1="0.2" y1="0" x2="0.6" y2="1"><stop offset="0" stop-color="#f6b71f"/><stop offset="1" stop-color="#f07c12"/></linearGradient>
  <linearGradient id="cld" x1="0" y1="0" x2="0" y2="1"><stop offset="0" stop-color="#e4f0fd"/><stop offset="1" stop-color="#a5c9f6"/></linearGradient></defs>
  <circle cx="955" cy="747.800" r="10.100" fill="url(#sun)"/>
  <path d="M955.600 754.200a2.800 2.800 0 0 1 .3-5.600 4.200 4.200 0 0 1 7.800-1 3.400 3.400 0 0 1 .6 6.600z" fill="url(#cld)"/>
  <circle cx="961.100" cy="741.400" r="5.900" fill="#d42a20"/>
  <path d="M959.5 739.9l1.900-1.500h.95v6.700h-1.250v-5.100l-1.600 1.100z" fill="#fff"/>
  <!-- tray -->
  <g fill="none" stroke="#fff" stroke-width="1.300" stroke-linecap="round" stroke-linejoin="round">
    <path d="M1073.200 751.500l5.900-5.900 5.900 5.900"/>
    <!-- meet now -->
    <rect x="1098.200" y="743.600" width="7.400" height="8" rx="1.600" stroke-width="1.200"/>
    <path d="M1105.600 746.600l3-1.600v5.400l-3-1.600M1099 740.500c1.800-.8 4-.8 5.800 0M1099 755.200c1.800.8 4 .8 5.800 0" stroke-width="1.100"/>
    <!-- mic -->
    <path d="M1122.400 747.300a4.300 4.300 0 0 0 8.600 0M1126.700 751.800v3.600M1123.800 755.600h5.800" stroke-width="1.100"/>
    <!-- wifi -->
    <path d="M1146.600 755a11.800 11.800 0 0 1 11.800-11.800M1149.800 755a8.600 8.600 0 0 1 8.600-8.600M1153 755a5.400 5.400 0 0 1 5.400-5.400" stroke="#9a9a9a" stroke-width="1.200"/>
    <path d="M1149.800 755a8.600 8.600 0 0 1 5-7.800M1153 755a5.400 5.400 0 0 1 5.400-5.400" stroke="#fff" stroke-width="1.200"/>
    <!-- battery -->
    <rect x="1171.500" y="745" width="10" height="6.200" stroke-width="1.100"/>
    <path d="M1168 744v3M1170.400 744v3M1167.300 747h3.800v1.500a1.900 1.900 0 0 1-3.800 0zM1169.200 750.500v2.500h2" stroke-width="1"/>
    <!-- volume -->
    <path d="M1191.300 746h2.800l3.800-3.600v12l-3.800-3.600h-2.800z" stroke-width="1.100"/>
    <path d="M1200.200 745.200a4.200 4.200 0 0 1 0 6.400M1202.600 743.200a7.200 7.200 0 0 1 0 10.400M1205 741.400a9.800 9.800 0 0 1 0 14" stroke-width="1.100"/>
    <!-- pen -->
    <path d="M1224.600 753.600l1-3.600 7-7.800a1.900 1.900 0 0 1 2.800 2.600l-7.200 7.600z" stroke-width="1.200"/>
    <path d="M1230.400 744.800l2.600 2.400M1223.800 751.400c-2.600-.6-4.400 1-3.800 2.800.6 1.600 3 1.800 4.600.6M1232 749.600c2 .2 3.200 1 3.400 2.200" stroke-width="1.100"/>
    <!-- notifications -->
    <path d="M1325.300 740.500h15.600v11.600h-5.500l-2.300 2.700-2.300-2.700h-5.500z" stroke-width="1.200"/>
  </g>
  <rect x="1123.900" y="739.800" width="5.600" height="10" rx="2.800" fill="#fff"/>
  <circle cx="1157.600" cy="754.300" r="1.300" fill="#fff"/>
  <rect x="1172.600" y="746.200" width="4.600" height="3.800" fill="#fff"/>
  <rect x="1181.600" y="746.800" width="1.200" height="2.600" fill="#fff"/>
  <rect x="1360.500" y="728" width="1" height="40" fill="#5a5a5a"/>
</svg>
<span class="t" style="left:88.90px;top:13.20px;font-size:15.0px;line-height:15.0px;color:#1f1f1f;transform:scaleX(0.9534);">Type here to search</span>
<span class="t" style="left:974.50px;top:12.90px;font-size:15.0px;line-height:15.0px;color:#fff;transform:scaleX(0.8981);">25°C</span>
<span class="t" style="left:1012.40px;top:12.90px;font-size:15.0px;line-height:15.0px;color:#fff;transform:scaleX(0.8958);">Cerah</span>
<span class="t" style="left:1267.10px;top:5.24px;font-size:12.0px;line-height:12.0px;color:#fff;transform:scaleX(0.8777);">9:15</span>
<span class="t" style="left:1249.70px;top:23.04px;font-size:12.0px;line-height:12.0px;color:#fff;transform:scaleX(0.9650);">11/02/2025</span>
</div>
</body>
</html>
